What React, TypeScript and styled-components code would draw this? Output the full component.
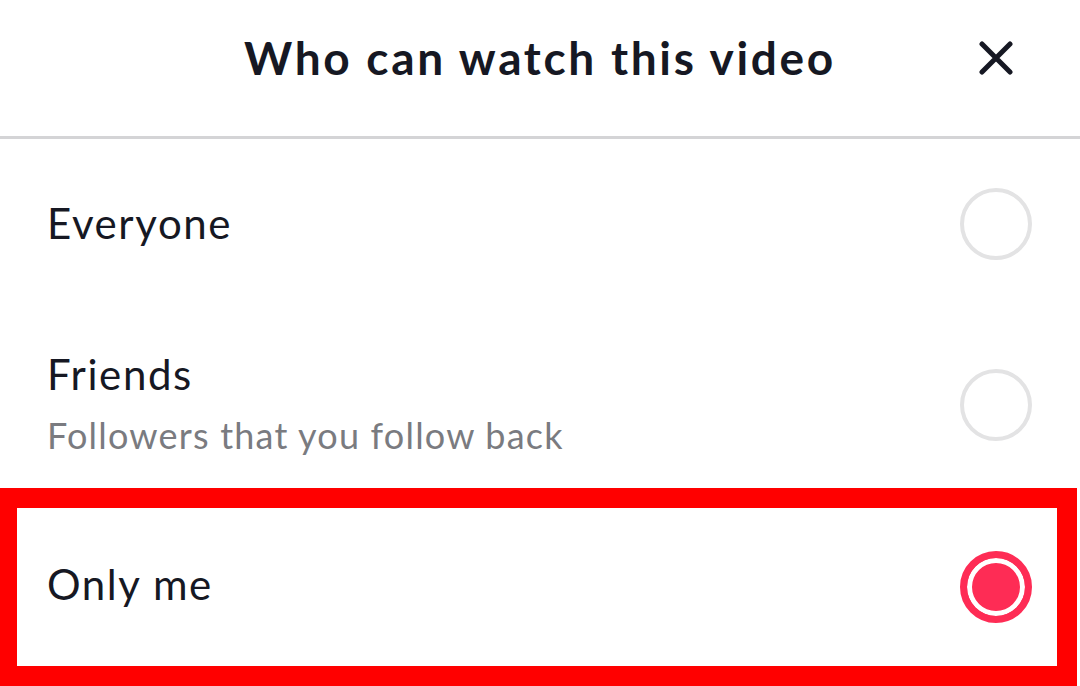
import React from "react";
import styled, { createGlobalStyle } from "styled-components";

const GlobalStyle = createGlobalStyle`
  html, body { margin: 0; padding: 0; background: #ffffff; }
  body { font-family: Lato, "Open Sans", "Liberation Sans", sans-serif; }
  #root { width: 1080px; height: 686px; overflow: hidden; }
`;

const Sheet = styled.div`
  width: 1080px;
  height: 686px;
  background: #ffffff;
  display: flex;
  flex-direction: column;
  overflow: hidden;
`;

const Header = styled.header`
  flex: none;
  height: 139px;
  box-sizing: border-box;
  display: grid;
  grid-template-columns: 1fr auto 1fr;
  align-items: center;
  border-bottom: 3px solid #d4d4d6;
  padding-bottom: 20px;
`;

const Title = styled.h1`
  grid-column: 2;
  margin: 0;
  font-family: Lato, "Open Sans", sans-serif;
  font-weight: 700;
  font-size: 46px;
  line-height: 1;
  letter-spacing: 2.7px;
  color: #161823;
  white-space: nowrap;
`;

const CloseButton = styled.button`
  grid-column: 3;
  justify-self: end;
  margin-right: 67px;
  width: 34px;
  height: 34px;
  padding: 0;
  border: none;
  background: none;
  display: flex;
  align-items: center;
  justify-content: center;
  color: #161823;
`;

const Row = styled.div<{ $height: number; $top?: number; $bottom?: number }>`
  flex: none;
  height: ${(p) => p.$height}px;
  box-sizing: border-box;
  padding: ${(p) => p.$top ?? 0}px 48px ${(p) => p.$bottom ?? 0}px 47px;
  display: flex;
  align-items: center;
  justify-content: space-between;
`;

const Highlight = styled.div`
  flex: none;
  width: 1077px;
  height: 198px;
  box-sizing: border-box;
  border: 20px solid #ff0000;
  border-left-width: 17px;
  display: flex;
`;

const InnerRow = styled.div`
  flex: 1;
  box-sizing: border-box;
  padding: 0 25px 6px 30px;
  display: flex;
  align-items: center;
  justify-content: space-between;
`;

const Labels = styled.div`
  display: flex;
  flex-direction: column;
  gap: 18px;
`;

const Label = styled.span`
  font-family: Lato, "Open Sans", sans-serif;
  font-size: 42px;
  line-height: 46px;
  letter-spacing: 1.6px;
  color: #161823;
`;

const Hint = styled.span`
  font-family: Lato, "Open Sans", sans-serif;
  font-size: 36px;
  line-height: 40px;
  letter-spacing: 1.2px;
  color: #7a7b80;
`;

const Radio = styled.span<{ $checked?: boolean }>`
  flex: none;
  width: 72px;
  height: 72px;
  border-radius: 50%;
  box-sizing: border-box;
  border: ${(p) => (p.$checked ? "7px solid #fe2c55" : "4px solid #e3e3e4")};
  background: ${(p) => (p.$checked ? "#fe2c55" : "#ffffff")};
  box-shadow: ${(p) => (p.$checked ? "inset 0 0 0 5px #ffffff" : "none")};
`;

const RadioSlot = styled.div<{ $shift: number }>`
  flex: none;
  display: flex;
  margin-top: ${(p) => p.$shift}px;
`;

const CloseIcon = () => (
  <svg width="34" height="34" viewBox="0 0 34 34" fill="none">
    <path
      d="M3 3 L31 31 M31 3 L3 31"
      stroke="currentColor"
      strokeWidth="5"
      strokeLinecap="round"
    />
  </svg>
);

export default function App() {
  return (
    <>
      <GlobalStyle />
      <Sheet>
        <Header>
          <Title>Who can watch this video</Title>
          <CloseButton aria-label="Close">
            <CloseIcon />
          </CloseButton>
        </Header>
        <Row $height={172} $bottom={4}>
          <Label>Everyone</Label>
          <RadioSlot $shift={2}>
            <Radio />
          </RadioSlot>
        </Row>
        <Row $height={177} $top={6}>
          <Labels>
            <Label>Friends</Label>
            <Hint>Followers that you follow back</Hint>
          </Labels>
          <RadioSlot $shift={4}>
            <Radio />
          </RadioSlot>
        </Row>
        <Highlight>
          <InnerRow>
            <Label>Only me</Label>
            <RadioSlot $shift={5}>
              <Radio $checked />
            </RadioSlot>
          </InnerRow>
        </Highlight>
      </Sheet>
    </>
  );
}
